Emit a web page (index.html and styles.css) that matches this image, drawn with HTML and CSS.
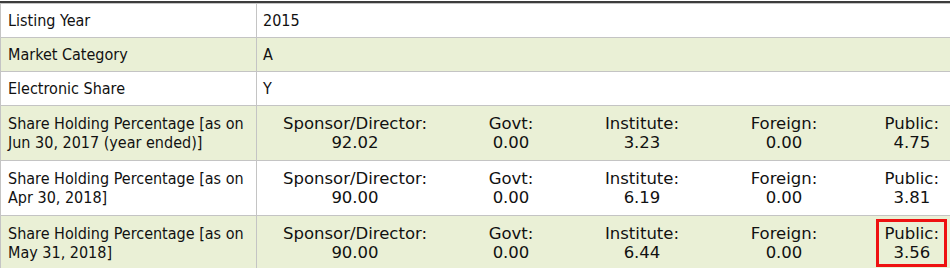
FILE: index.html
```html
<!DOCTYPE html>
<html>
<head>
<meta charset="utf-8">
<link rel="stylesheet" href="styles.css">
</head>
<body>
<div class="page">
  <div class="rule"></div>
  <div class="table">
    <div class="row">
      <div class="label">Listing Year</div>
      <div class="value">2015</div>
    </div>
    <div class="row alt">
      <div class="label">Market Category</div>
      <div class="value">A</div>
    </div>
    <div class="row">
      <div class="label">Electronic Share</div>
      <div class="value">Y</div>
    </div>
    <div class="row alt tall">
      <div class="label">Share Holding Percentage [as on Jun 30, 2017 (year ended)]</div>
      <div class="value holdings">
        <div class="h"><span>Sponsor/Director:<br>92.02</span></div>
        <div class="h"><span>Govt:<br>0.00</span></div>
        <div class="h"><span>Institute:<br>3.23</span></div>
        <div class="h"><span>Foreign:<br>0.00</span></div>
        <div class="h last"><span>Public:<br>4.75</span></div>
      </div>
    </div>
    <div class="row tall">
      <div class="label">Share Holding Percentage [as on Apr 30, 2018]</div>
      <div class="value holdings">
        <div class="h"><span>Sponsor/Director:<br>90.00</span></div>
        <div class="h"><span>Govt:<br>0.00</span></div>
        <div class="h"><span>Institute:<br>6.19</span></div>
        <div class="h"><span>Foreign:<br>0.00</span></div>
        <div class="h last"><span>Public:<br>3.81</span></div>
      </div>
    </div>
    <div class="row alt tall">
      <div class="label">Share Holding Percentage [as on May 31, 2018]</div>
      <div class="value holdings">
        <div class="h"><span>Sponsor/Director:<br>90.00</span></div>
        <div class="h"><span>Govt:<br>0.00</span></div>
        <div class="h"><span>Institute:<br>6.44</span></div>
        <div class="h"><span>Foreign:<br>0.00</span></div>
        <div class="h last"><span>Public:<br>3.56</span></div>
      </div>
    </div>
  </div>
  <div class="highlight"></div>
</div>
</body>
</html>
```
FILE: styles.css
```css
html, body {
  margin: 0;
  padding: 0;
  background: #ffffff;
}
.page {
  position: relative;
  width: 950px;
  height: 268px;
  overflow: hidden;
  font-family: "DejaVu Sans Condensed", "DejaVu Sans", sans-serif;
  font-stretch: condensed;
  font-size: 16px;
  color: #111111;
}
.rule {
  margin-top: 1px;
  height: 2px;
  background: #3c3c3c;
}
.table {
  border-top: 1px solid #c4c4c4;
  border-left: 1px solid #c4c4c4;
  width: 980px;
}
.row {
  display: grid;
  grid-template-columns: 256px 1fr;
  height: 33px;
  border-bottom: 1px solid #c4c4c4;
  background: #ffffff;
}
.row.alt {
  background: #eaf0d6;
}
.row.tall {
  height: 54px;
}
.label {
  border-right: 1px solid #c4c4c4;
  padding: 0 4px 0 7px;
  display: flex;
  align-items: center;
  line-height: 19px;
}
.value {
  padding-left: 6px;
  display: flex;
  align-items: center;
  line-height: 19px;
}
.holdings {
  display: grid;
  grid-template-columns: 196px 116px 146px 138px 86px;
  padding-left: 0;
  align-items: center;
  font-family: "DejaVu Sans", sans-serif;
  font-stretch: normal;
  font-size: 16.5px;
  line-height: 19px;
}
.h {
  text-align: center;
}
.h.last {
  text-align: right;
  padding-right: 0;
}
.h span {
  display: inline-block;
  text-align: center;
}
.highlight {
  position: absolute;
  left: 876px;
  top: 219px;
  width: 71px;
  height: 48px;
  box-sizing: border-box;
  border: 3px solid #ee1111;
}
```
